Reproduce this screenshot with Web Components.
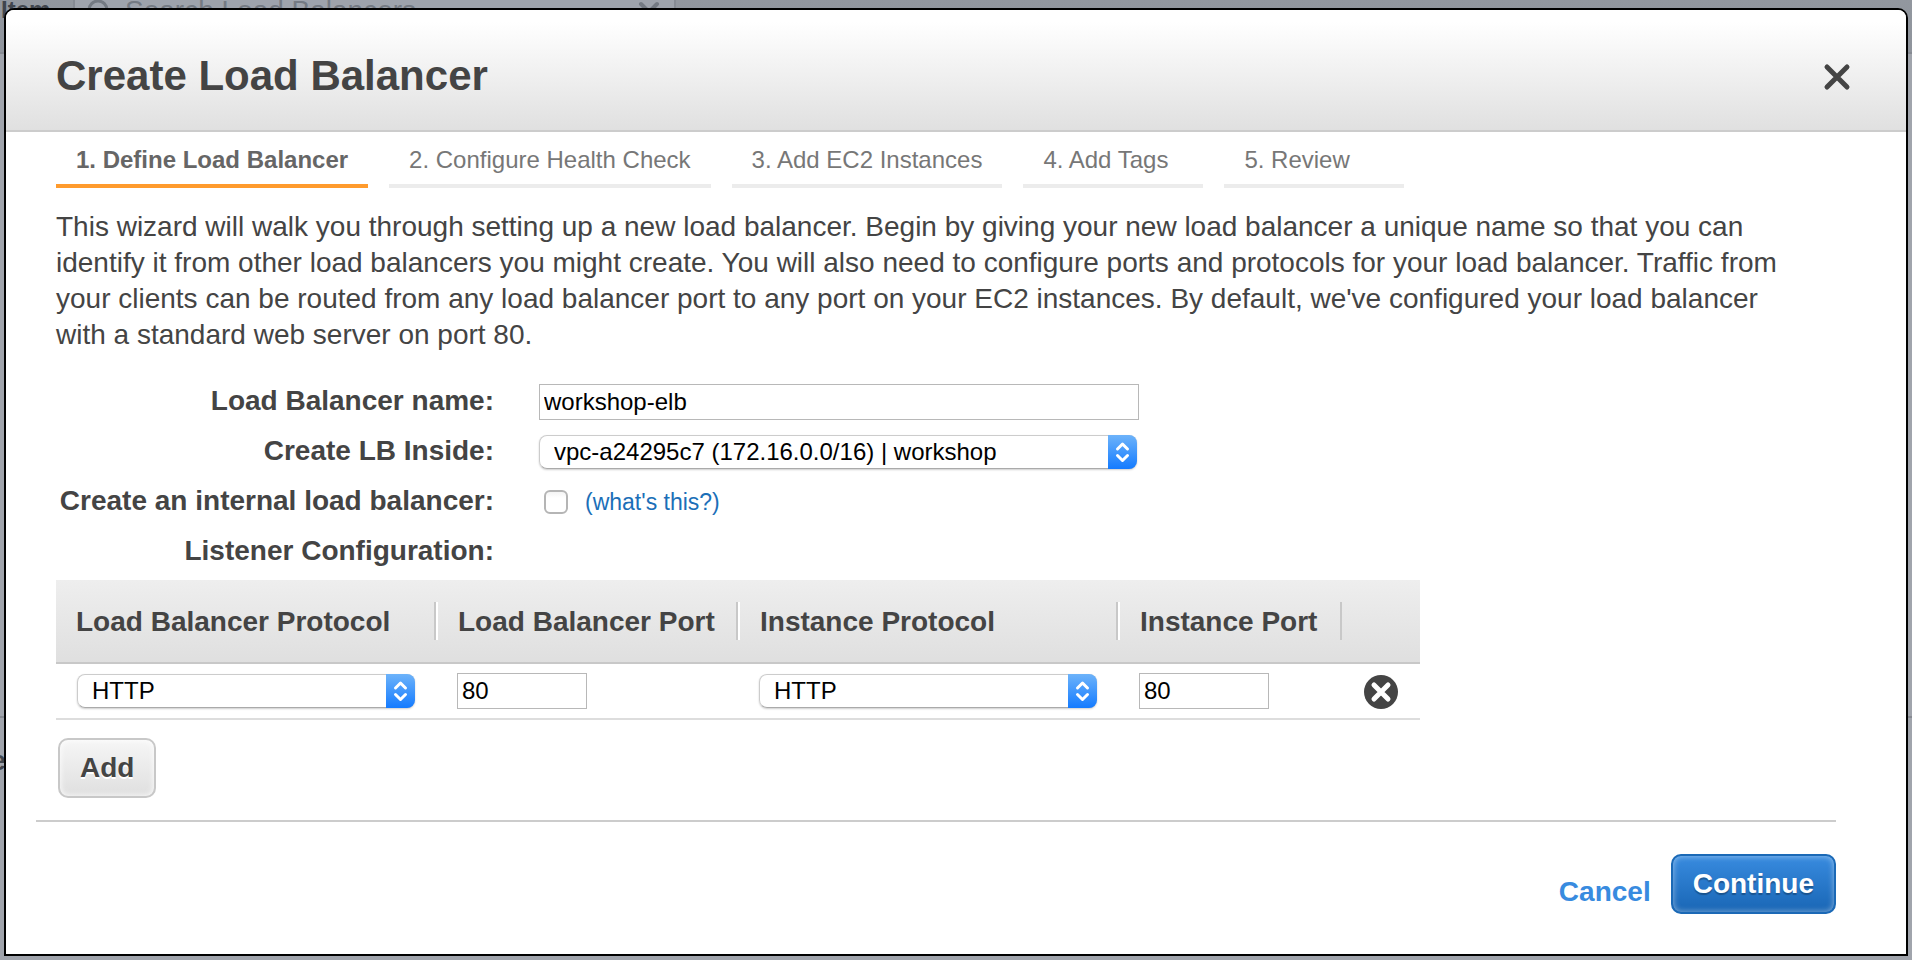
<!DOCTYPE html>
<html lang="en">
<head>
<meta charset="utf-8">
<title>Create Load Balancer</title>
<style>
html,body{margin:0;height:100%;background:#9a9ea6}
body{font:24px/30px "Liberation Sans",Arial,sans-serif;color:#444}
</style>
</head>
<body>
<lb-app></lb-app>
<script>
const define=(name,html,setup)=>customElements.define(name,class extends HTMLElement{
  connectedCallback(){
    if(this.shadowRoot)return;
    const t=document.createElement('template');
    t.innerHTML='<style>*{box-sizing:border-box}</style>'+html;
    this.attachShadow({mode:'open',delegatesFocus:true}).append(t.content.cloneNode(true));
    if(setup)setup(this,this.shadowRoot);
  }
});

/* Console page dimmed behind the dialog */
define('console-backdrop',`
<style>
:host{position:absolute;inset:0;display:grid;grid-template-rows:54px 664px 1fr;background:#a0a4ac;color:#40454d}
.bar{display:flex;background:linear-gradient(#92979f,#8f949c);border-bottom:2px solid #868a92}
.item{width:73px;padding-left:1px;font-weight:bold;line-height:20px}
.search{width:603px;height:40px;background:#9ea3ac;border:solid #868b94;border-width:0 2px;display:flex;gap:14px;padding:0 14px 0 12px;color:#747a83;font-size:28px;line-height:22px}
.search span{flex:1}
.panel{border-bottom:2px solid #868a92}
.detail{font-weight:bold;font-size:28px;line-height:86px;width:6px;direction:rtl}
svg{flex:none}
</style>
<div class="bar"><span class="item">Item</span><div class="search">
<svg width="24" height="24" fill="none" stroke="currentColor" stroke-width="3"><circle cx="11" cy="10" r="9"/></svg>
<span>Search Load Balancers</span>
<svg width="22" height="22" fill="none" stroke="currentColor" stroke-width="4" stroke-linecap="round"><path d="M3 4 19 20M19 4 3 20"/></svg>
</div></div><div class="panel"></div><div class="detail">e</div>`);

define('dialog-frame',`
<style>
:host{position:relative;display:flex;flex-direction:column;min-height:calc(100vh - 12px);border:2px solid #000;border-radius:10px 10px 0 0;background:#fff;overflow:hidden}
header{display:flex;align-items:center;justify-content:space-between;height:122px;padding:12px 54px 0 50px;border-bottom:2px solid #ccc;background:linear-gradient(#fff 10%,#e0e0e0)}
h1{margin:0;font-size:42px;line-height:48px}
button{border:0;padding:0;background:none;color:#444;width:30px;height:30px}
svg{display:block}
</style>
<header><h1><slot name="title"></slot></h1><button aria-label="Close"><svg width="30" height="30" fill="none" stroke="currentColor" stroke-width="5" stroke-linecap="round"><path d="M5 6 25 26M25 6 5 26"/></svg></button></header>
<slot></slot>`);

define('wizard-step',`
<style>
:host{display:block;min-width:180px;padding:0 20px;height:56px;line-height:56px;border-bottom:4px solid #ececec;color:#777;white-space:nowrap}
:host([active]){border-color:#ff9b2d;color:#666;font-weight:bold}
</style><slot></slot>`);

define('wizard-steps',`
<style>:host{display:flex;gap:21px}</style><slot></slot>`);

define('form-row',`
<style>
:host{display:grid;grid-template-columns:438px 1fr;column-gap:45px;height:50px;align-items:center}
label{font-weight:bold;font-size:28px;text-align:right;white-space:nowrap}
.field{display:flex;align-items:center;padding-top:2px}
</style><label></label><div class="field"><slot></slot></div>`,(h,r)=>{
  const l=r.querySelector('label');l.textContent=h.getAttribute('label');
  l.onclick=()=>{const c=h.firstElementChild;if(c)c.focus()};
});

define('text-field',`
<style>
:host{display:block;width:var(--w,130px)}
input{display:block;width:100%;height:36px;border:1px solid #b8b8b8;border-radius:0;padding:0 4px;font:inherit;color:#000;background:#fff;outline:0}
</style><input type="text">`,(h,r)=>{
  const i=r.querySelector('input');i.value=h.getAttribute('value');i.setAttribute('aria-label',h.getAttribute('label'));
});

define('select-field',`
<style>
:host{display:grid;width:var(--w,338px);height:34px;border-radius:8px;box-shadow:0 1px 2px #0003}
select,.knob{grid-area:1/1}
select{appearance:none;width:100%;height:34px;border:1px solid #ccc;border-bottom-color:#aaa;border-radius:8px;padding:0 40px 0 14px;font:inherit;color:#000;background:#fff;outline:0}
.knob{justify-self:end;width:29px;height:34px;border-radius:0 8px 8px 0;background:linear-gradient(#6db3fa,#147bff);pointer-events:none}
svg{display:block}
</style><select></select><span class="knob"><svg width="29" height="34" fill="none" stroke="#fff" stroke-width="3" stroke-linecap="round" stroke-linejoin="round"><path d="M9.500 14 14.500 9 19.500 14M9.500 20.500 14.500 25.500 19.500 20.500"/></svg></span>`,(h,r)=>{
  const s=r.querySelector('select');s.add(new Option(h.getAttribute('value')));s.setAttribute('aria-label',h.getAttribute('label'));
});

define('check-field',`
<style>
:host{display:block;margin:0 17px 0 5px}
input{display:block;appearance:none;margin:0;width:24px;height:24px;border:2px solid #b5b5b5;border-radius:6px;background:linear-gradient(#f4f4f4,#fff 30%)}
</style><input type="checkbox">`,(h,r)=>r.querySelector('input').setAttribute('aria-label',h.getAttribute('label')));

define('push-button',`
<style>
:host{display:inline-block}
button{display:block;height:60px;padding:0 20px;border:2px solid #c8c8c8;border-radius:10px;background:linear-gradient(#f6f6f6,#dfdfdf);box-shadow:inset 0 0 6px #fff;color:#444;font:bold 28px/30px "Liberation Sans",Arial,sans-serif;text-shadow:0 2px 0 #fff}
:host([primary]) button{border-color:#1b69b6;background:linear-gradient(#388bdf,#1966b5);box-shadow:inset 0 0 6px #ffffff80;color:#fff;text-shadow:0 2px 1px #0004}
</style><button type="button"><slot></slot></button>`);

define('listener-table',`
<style>
:host{display:block;width:1364px;max-width:100%;margin-top:4px}
table{width:100%;table-layout:fixed;border-collapse:separate;border-spacing:0}
th{height:84px;padding:0;font-size:28px;text-align:left;white-space:nowrap;border-bottom:2px solid #c8c8c8}
thead tr{background:linear-gradient(#eee,#dfdfdf)}
th div{height:38px;line-height:40px;padding-left:22px;border-right:2px solid #c8c8c8;box-shadow:2px 0 #fff}
th:first-child div{padding-left:20px}
th:nth-child(4) div{box-shadow:none}
td{height:56px;padding:0 0 0 21px;border-bottom:2px solid #ddd}
td:last-child{padding:2px 0 0 22px}
td button{display:block;border:0;padding:0;background:none;width:34px;height:34px}
svg{display:block}
</style>
<table><colgroup><col style="width:380px"><col style="width:302px"><col style="width:380px"><col style="width:224px"><col></colgroup>
<thead><tr><th><div>Load Balancer Protocol</div></th><th><div>Load Balancer Port</div></th><th><div>Instance Protocol</div></th><th><div>Instance Port</div></th><th></th></tr></thead>
<tbody><tr><td><select-field value="HTTP" label="Load Balancer Protocol"></select-field></td><td><text-field value="80" label="Load Balancer Port"></text-field></td><td><select-field value="HTTP" label="Instance Protocol"></select-field></td><td><text-field value="80" label="Instance Port"></text-field></td>
<td><button aria-label="Remove listener"><svg width="34" height="34"><circle cx="17" cy="17" r="17" fill="#444"/><path d="M10 10 24 24M24 10 10 24" stroke="#fff" stroke-width="5" stroke-linecap="round"/></svg></button></td></tr></tbody></table>`);

define('lb-app',`
<style>
:host{display:block;padding:8px 4px 4px}
main{padding:0 70px 0 50px}
p{margin:21px 0 23px;padding-right:30px;font-size:28px;line-height:36px}
.add{padding:18px 2px 22px}
footer{display:flex;justify-content:flex-end;align-items:flex-start;gap:20px;margin:0 70px 0 30px;padding-top:32px;border-top:2px solid #ccc}
a{color:#1b6fb8;text-decoration:none}
form-row a{font-size:23px}
footer a{color:#388bdf;font-weight:bold;font-size:28px;padding-top:23px}
</style>
<console-backdrop></console-backdrop>
<dialog-frame><span slot="title">Create Load Balancer</span>
<main>
<wizard-steps><wizard-step active>1. Define Load Balancer</wizard-step><wizard-step>2. Configure Health Check</wizard-step><wizard-step>3. Add EC2 Instances</wizard-step><wizard-step>4. Add Tags</wizard-step><wizard-step>5. Review</wizard-step></wizard-steps>
<p>This wizard will walk you through setting up a new load balancer. Begin by giving your new load balancer a unique name so that you can identify it from other load balancers you might create. You will also need to configure ports and protocols for your load balancer. Traffic from your clients can be routed from any load balancer port to any port on your EC2 instances. By default, we've configured your load balancer with a standard web server on port 80.</p>
<form-row label="Load Balancer name:"><text-field value="workshop-elb" label="Load Balancer name" style="--w:600px"></text-field></form-row>
<form-row label="Create LB Inside:"><select-field value="vpc-a24295c7 (172.16.0.0/16) | workshop" label="Create LB Inside" style="--w:598px"></select-field></form-row>
<form-row label="Create an internal load balancer:"><check-field label="Create an internal load balancer"></check-field><a href="#">(what's this?)</a></form-row>
<form-row label="Listener Configuration:"></form-row>
<listener-table></listener-table>
<div class="add"><push-button>Add</push-button></div>
</main>
<footer><a href="#">Cancel</a><push-button primary>Continue</push-button></footer>
</dialog-frame>`);
</script>
</body>
</html>
